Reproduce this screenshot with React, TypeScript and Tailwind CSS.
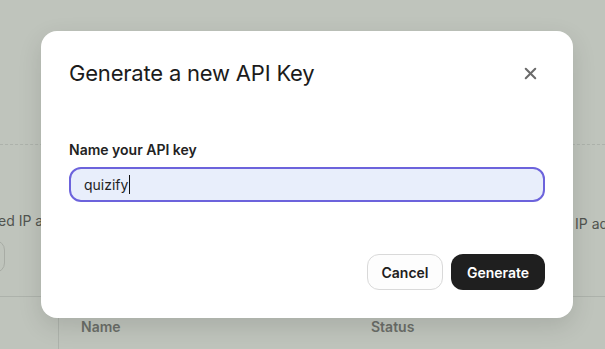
import { X } from 'lucide-react';

export default function App() {
  return (
    <div className="relative w-[605px] h-[349px] overflow-hidden bg-[#bfc4bc] font-['Inter','Liberation_Sans',sans-serif]">
      {/* Page behind the dialog (dimmed) */}
      <div className="flex flex-col h-full">
        <div className="h-[145px] border-b border-dashed border-[#adb2ab]" />
        <div className="flex h-[152px] border-b border-[#adb2ab]">
          <div className="flex flex-col w-[300px] -ml-[2px] pt-[66px]">
            <span className="text-[14px] leading-5 text-[#51544f] whitespace-nowrap">ed IP addresses</span>
            <div className="mt-[9px] -ml-[60px] w-[67px] h-[33px] rounded-[10px] border border-[#a8aca5]" />
          </div>
          <div className="ml-auto w-[30px] pt-[66px] overflow-hidden">
            <span className="text-[14px] leading-5 text-[#51544f] whitespace-nowrap">IP addresses</span>
          </div>
        </div>
        <div className="flex flex-1">
          <div className="w-[59px] border-r border-[#adb2ab]" />
          <div className="flex flex-1 pl-[22px] pt-[19px] text-[14px] font-semibold text-[#6b6e69]">
            <span className="w-[290px]">Name</span>
            <span>Status</span>
          </div>
        </div>
      </div>

      {/* Dialog */}
      <div className="absolute left-[41px] top-[31px] w-[532px] h-[287px] rounded-[16px] bg-white shadow-[0_8px_24px_rgba(0,0,0,0.12)] px-7 pt-[28px] pb-[28px] flex flex-col">
        <div className="flex items-center justify-between h-[28px]">
          <h2 className="text-[22px] leading-7 tracking-[-0.2px] text-[#1b1b1b]">Generate a new API Key</h2>
          <button className="mr-[5px] text-[#6b6b6b]">
            <X size={19} strokeWidth={2.6} />
          </button>
        </div>

        <label className="mt-[53px] text-[14px] leading-5 font-semibold text-[#232323]">Name your API key</label>
        <div className="mt-[7px] h-[35px] rounded-[12px] border-2 border-[#6c63dc] bg-[#e8eefb] flex items-center pl-[13px]">
          <span className="text-[14px] text-[#1f1f1f]">quizify</span>
          <span className="ml-px w-px h-[19px] bg-[#111]" />
        </div>

        <div className="mt-auto flex justify-end gap-2">
          <button className="w-[76px] h-[36px] rounded-[12px] border border-[#d9d9d9] bg-[#fdfdfd] text-[14px] font-semibold text-[#202020]">
            Cancel
          </button>
          <button className="w-[94px] h-[36px] rounded-[12px] bg-[#1f1f1f] text-[14px] font-semibold text-white">
            Generate
          </button>
        </div>
      </div>
    </div>
  );
}
